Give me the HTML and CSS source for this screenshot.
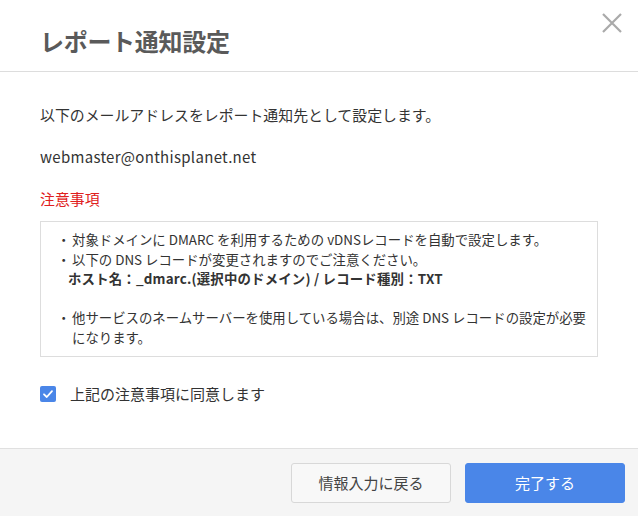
FILE: index.html
```html
<!DOCTYPE html>
<html lang="ja">
<head>
<meta charset="utf-8">
<link rel="stylesheet" href="styles.css">
</head>
<body>
<div class="dialog">
  <div class="header">
    <h1 class="title">レポート通知設定</h1>
    <span class="close" aria-label="close">
      <svg width="20" height="20" viewBox="0 0 20 20"><path d="M1 1L19 19M19 1L1 19" stroke="#aaa" stroke-width="2.2" fill="none"/></svg>
    </span>
  </div>
  <div class="body">
    <p class="lead">以下のメールアドレスをレポート通知先として設定します。</p>
    <p class="email">webmaster@onthisplanet.net</p>
    <p class="caution">注意事項</p>
    <div class="notes">
      <ul class="list">
        <li>対象ドメインに DMARC を利用するための vDNSレコードを自動で設定します。</li>
        <li>以下の DNS レコードが変更されますのでご注意ください。</li>
      </ul>
      <p class="record">ホスト名：_dmarc.(選択中のドメイン) / レコード種別：TXT</p>
      <ul class="list gap">
        <li>他サービスのネームサーバーを使用している場合は、別途 DNS レコードの設定が必要になります。</li>
      </ul>
    </div>
    <label class="agree">
      <span class="check"><svg width="16" height="16" viewBox="0 0 16 16"><path d="M4 8.3L6.8 11L12 5.2" stroke="#fff" stroke-width="1.8" fill="none" stroke-linecap="round" stroke-linejoin="round"/></svg></span>
      <span>上記の注意事項に同意します</span>
    </label>
  </div>
  <div class="footer">
    <button class="btn btn-back">情報入力に戻る</button>
    <button class="btn btn-done">完了する</button>
  </div>
</div>
</body>
</html>
```
FILE: styles.css
```css
* { box-sizing: border-box; }
html, body { margin: 0; padding: 0; background: #fff; }
body {
  font-family: "Noto Sans CJK JP", "Noto Sans", sans-serif;
  color: #333;
  width: 638px;
  height: 516px;
  overflow: hidden;
}
.dialog { display: flex; flex-direction: column; height: 516px; }
.header {
  height: 72px;
  border-bottom: 1px solid #ddd;
  display: flex;
  align-items: flex-start;
  justify-content: space-between;
  padding: 0 16px 0 40px;
}
.title {
  margin: 24px 0 0;
  font-size: 24px;
  line-height: 34px;
  font-weight: bold;
  color: #5a5a5a;
  letter-spacing: -0.3px;
}
.close { margin-top: 13px; display: flex; }
.body { flex: 1; padding: 0 40px; }
.lead { margin: 32px 0 0; font-size: 14.9px; line-height: 22px; }
.email { margin: 20px 0 0; font-size: 15px; line-height: 22px; letter-spacing: 0.3px; }
.caution { margin: 20px 0 0; font-size: 14.9px; line-height: 22px; color: #e02020; }
.notes {
  margin-top: 11px;
  border: 1px solid #ddd;
  padding: 8px 8px 9px 18px;
  font-size: 13.4px;
  line-height: 19.5px;
}
.list { margin: 0; padding: 0; list-style: none; }
.list li { padding-left: 13px; position: relative; }
.list li::before { content: "・"; position: absolute; left: -2px; top: 0; }
.list.gap { margin-top: 19.5px; }
.record { margin: 0; padding-left: 9px; font-weight: bold; letter-spacing: 0.2px; }
.agree {
  display: flex;
  align-items: center;
  gap: 14px;
  margin-top: 26px;
  font-size: 15px;
  line-height: 22px;
}
.check {
  width: 16px; height: 16px;
  border-radius: 2px;
  background: #4a86e8;
  display: flex;
}
.footer {
  height: 68px;
  background: #f5f5f5;
  border-top: 1px solid #e0e0e0;
  display: flex;
  justify-content: flex-end;
  align-items: center;
  gap: 14px;
  padding: 0 13px 0 0;
}
.btn {
  width: 160px;
  height: 40px;
  font-family: inherit;
  font-size: 15px;
  border-radius: 3px;
  cursor: pointer;
}
.btn-back { background: #f8f8f8; border: 1px solid #d8d8d8; color: #444; }
.btn-done { background: #4a86e8; border: 1px solid #4a86e8; color: #fff; }
```
